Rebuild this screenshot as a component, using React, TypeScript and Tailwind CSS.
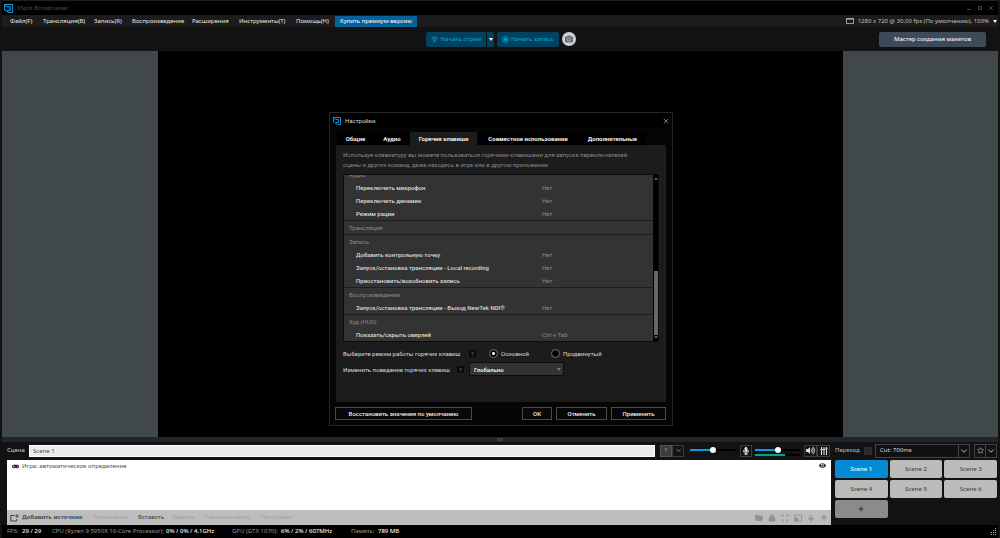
import React from "react";
import { ArrowDown, ArrowUp, ChevronDown, Folder, Lock, Maximize, Star } from "lucide-react";
import { FaGamepad, FaEye, FaCamera, FaMicrophone, FaVolumeUp } from "react-icons/fa";

function Logo({ className }: { className: string }) {
  return (
    <svg viewBox="0 0 16 16" className={className} fill="none" stroke="#119ce4" strokeWidth="1.8" aria-hidden="true">
      <path d="M1 1H15V15H9L1 10Z" />
      <path d="M1 1L5 5H11V11H6" />
    </svg>
  );
}

const menu = [
  { label: "Файл(F)", width: "w-[33px]" },
  { label: "Трансляция(B)", width: "w-[51px]" },
  { label: "Запись(R)", width: "w-[38px]" },
  { label: "Воспроизведение", width: "w-[60px]" },
  { label: "Расширения", width: "w-[47px]" },
  { label: "Инструменты(T)", width: "w-[57px]" },
  { label: "Помощь(H)", width: "w-[39px]" },
];

function TitleBar() {
  return (
    <header className="flex h-[15px] items-center border-t border-[#202020] bg-black pr-1 pl-[2px] text-[#4a4a4a]">
      <Logo className="size-[9px]" />
      <h1 className="ml-1 flex-1">XSplit Broadcaster</h1>
      <div className="flex gap-[5px]">
        <button aria-label="Свернуть" className="flex h-2 w-[6px] items-center justify-center">
          <svg viewBox="0 0 6 6" className="size-[6px]" stroke="currentColor"><path d="M1 4.5H5" /></svg>
        </button>
        <button aria-label="Развернуть" className="flex h-2 w-[6px] items-center justify-center">
          <svg viewBox="0 0 6 6" className="size-[6px]" fill="none" stroke="currentColor"><path d="M1.5 1.5H4.5V4.5H1.5Z" /></svg>
        </button>
        <button aria-label="Закрыть" className="flex h-2 w-[6px] items-center justify-center">
          <svg viewBox="0 0 6 6" className="size-[6px]" stroke="currentColor"><path d="M1 1L5 5M5 1L1 5" /></svg>
        </button>
      </div>
    </header>
  );
}

function MenuBar() {
  return (
    <nav className="flex h-3 items-center bg-[#1c1c1c] pr-px pl-2 text-[#e8e8e8]">
      {menu.map((item) => (
        <button key={item.label} className={`${item.width} text-left whitespace-nowrap`}>
          {item.label}
        </button>
      ))}
      <button className="h-[11px] w-[82px] bg-[#06619a] whitespace-nowrap text-white">Купить премиум-версию</button>
      <button className="ml-auto flex items-center gap-1 whitespace-nowrap text-[#c0c0c0]">
        <svg viewBox="0 0 8 6" className="h-[6px] w-2" fill="none" stroke="#c8c8c8" strokeWidth="0.8" aria-hidden="true">
          <path d="M.4 .4H7.6V5.6H.4ZM.4 1.2H7.6" />
        </svg>
        <span>1280 x 720 @ 30,00 fps (По умолчанию), 103%</span>
        <svg viewBox="0 0 4 3" className="h-[3px] w-1" fill="#fff" aria-hidden="true"><path d="M0 0H4L2 3Z" /></svg>
      </button>
    </nav>
  );
}

function Toolbar() {
  return (
    <div className="grid h-6 grid-cols-[1fr_auto_1fr] items-center bg-[#121212] pl-[2px] font-medium">
      <div />
      <div className="flex items-center gap-[3px] text-[#00a5c4]">
        <div className="flex h-[15px] gap-px">
          <button className="flex w-[60px] items-center justify-center gap-[3px] rounded-l-xs bg-[#03415f] whitespace-nowrap">
            <svg viewBox="0 0 8 8" className="size-[7px] shrink-0" fill="none" stroke="currentColor" strokeWidth="1" aria-hidden="true">
              <path d="M.5 2.5Q4 -.3 7.5 2.5M1.8 4Q4 2.4 6.2 4M3 5.5Q4 4.8 5 5.5L4 7Z" />
            </svg>
            Начать стрим
          </button>
          <button aria-label="Выбрать трансляцию" className="flex w-[7px] items-center justify-center rounded-r-xs bg-[#03415f]">
            <svg viewBox="0 0 4 3" className="h-[3px] w-1" fill="#fff"><path d="M0 0H4L2 3Z" /></svg>
          </button>
        </div>
        <button className="flex h-[15px] w-[62px] items-center justify-center gap-[2px] rounded-xs bg-[#03415f] whitespace-nowrap">
          <svg viewBox="0 0 8 8" className="size-[7px] shrink-0" aria-hidden="true">
            <circle cx="4" cy="4" r="3.4" fill="none" stroke="currentColor" strokeWidth="0.9" />
            <circle cx="4" cy="4" r="2" fill="currentColor" />
          </svg>
          Начать запись
        </button>
        <button aria-label="Снимок экрана" className="flex size-[14px] items-center justify-center rounded-full bg-[#cfd1d3] text-[#68717b]">
          <FaCamera className="size-2" />
        </button>
      </div>
      <button className="mr-3 h-[15px] w-[107px] justify-self-end rounded-xs bg-[#3f4a59] whitespace-nowrap text-[#f0f0f0]">
        Мастер создания макетов
      </button>
    </div>
  );
}

const sections = [
  { name: "Аудио", rows: [["Переключить микрофон", "Нет"], ["Переключить динамик", "Нет"], ["Режим рации", "Нет"]] },
  { name: "Трансляция", rows: [] },
  {
    name: "Запись",
    rows: [
      ["Добавить контрольную точку", "Нет"],
      ["Запуск/остановка трансляции - Local recording", "Нет"],
      ["Приостановить/возобновить запись", "Нет"],
    ],
  },
  { name: "Воспроизведение", rows: [["Запуск/остановка трансляции - Выход NewTek NDI®", "Нет"]] },
  { name: "Худ (HUD)", rows: [["Показать/скрыть оверлей", "Ctrl + Tab"]] },
];

const tabs = [
  { label: "Общие", width: "w-[37px]" },
  { label: "Аудио", width: "w-[34px]" },
  { label: "Горячие клавиши", width: "w-[67px]" },
  { label: "Совместное использование", width: "w-[100px]" },
  { label: "Дополнительные", width: "w-[67px]" },
];

function HotkeyTable() {
  return (
    <div className="flex h-[168px] border border-[#0c0c0c] bg-[#0a0a0a]">
      <div className="flex flex-1 flex-col justify-end overflow-hidden bg-[#333333]">
        <table className="w-full table-fixed border-separate border-spacing-0 text-left">
          <colgroup>
            <col className="w-[198px]" />
            <col />
          </colgroup>
          {sections.map((section) => (
            <tbody key={section.name}>
              <tr>
                <th colSpan={2} className="h-[14px] border-t border-[#1e1e1e] p-0 pl-[5px] font-normal text-[#8a8a8a]">
                  {section.name}
                </th>
              </tr>
              {section.rows.map(([name, key]) => (
                <tr key={name}>
                  <td className="h-[13px] p-0 pl-3 font-medium whitespace-nowrap text-[#dddddd]">{name}</td>
                  <td className="h-[13px] p-0 text-[#8c8c8c]">{key}</td>
                </tr>
              ))}
            </tbody>
          ))}
        </table>
      </div>
      <div className="flex w-[5px] flex-col items-center bg-black py-px" aria-hidden="true">
        <svg viewBox="0 0 4 3" className="mt-px h-[3px] w-1 shrink-0" fill="#555"><path d="M0 3H4L2 0Z" /></svg>
        <div className="mt-auto h-[64px] w-[4px] bg-[#676767]" />
        <svg viewBox="0 0 4 3" className="mt-px mb-px h-[3px] w-1 shrink-0" fill="#555"><path d="M0 0H4L2 3Z" /></svg>
      </div>
    </div>
  );
}

function Hint() {
  return (
    <button aria-label="Подсказка" className="flex size-[7px] items-center justify-center bg-[#0b0b0b] text-[#777]">
      ?
    </button>
  );
}

function ModeOption({ label, checked }: { label: string; checked: boolean }) {
  return (
    <label className="flex items-center gap-[3px]">
      <input
        type="radio"
        name="mode"
        defaultChecked={checked}
        className="size-[9px] appearance-none rounded-full border border-[#747474] bg-black checked:bg-[radial-gradient(circle,#fff_0_1px,#000_2px)]"
      />
      {label}
    </label>
  );
}

const footerButton = "h-[13px] border border-[#4a4a4a] bg-[#080808] font-medium whitespace-nowrap text-[#eeeeee]";

function SettingsDialog() {
  return (
    <section
      role="dialog"
      aria-label="Настройки"
      className="w-[344px] border border-[#262626] bg-[#050505] px-[6px] pb-[5px] font-[family-name:Roboto,sans-serif] text-[#d8d8d8]"
    >
      <header className="-mx-[3px] flex h-[15px] items-center gap-1 bg-black">
        <Logo className="size-2" />
        <h2 className="flex-1">Настройки</h2>
        <button aria-label="Закрыть">
          <svg viewBox="0 0 6 6" className="size-[6px]" stroke="#aaa" strokeWidth="0.7"><path d="M.7 .7L5.3 5.3M5.3 .7L.7 5.3" /></svg>
        </button>
      </header>
      <div role="tablist" className="mt-1 flex gap-px px-px">
        {tabs.map((tab, i) => (
          <button
            key={tab.label}
            role="tab"
            aria-selected={i === 2}
            className={`${tab.width} h-[13px] bg-black font-bold whitespace-nowrap text-[#eeeeee] aria-selected:bg-[#1c1c1c]`}
          >
            {tab.label}
          </button>
        ))}
      </div>
      <div className="h-[257px] bg-[#1c1c1c] px-[7px] pt-[5px]">
        <p className="mb-1 leading-[10px] text-[#888888]">
          Используя клавиатуру вы можете пользоваться горячими клавишами для запуска переключателей
          <br />
          сцены и других команд, даже находясь в игре или в другом приложении.
        </p>
        <HotkeyTable />
        <div className="mt-[5px] flex h-3 items-center whitespace-nowrap">
          <span className="w-[126px]">Выберите режим работы горячих клавиш</span>
          <Hint />
          <div className="ml-[13px] flex">
            <div className="w-[62px]"><ModeOption label="Основной" checked /></div>
            <ModeOption label="Продвинутый" checked={false} />
          </div>
        </div>
        <div className="mt-[3px] flex items-center whitespace-nowrap">
          <label htmlFor="scope" className="w-[114px]">Изменить поведение горячих клавиш</label>
          <Hint />
          <div className="ml-[5px] grid w-[95px] items-center">
            <select
              id="scope"
              className="col-start-1 row-start-1 h-[14px] appearance-none border border-[#0c0c0c] bg-[#333333] px-1 font-medium text-white"
            >
              <option>Глобально</option>
            </select>
            <svg viewBox="0 0 4 3" className="pointer-events-none col-start-1 row-start-1 mr-[3px] h-[3px] w-1 justify-self-end" fill="#777"><path d="M0 0H4L2 3Z" /></svg>
          </div>
        </div>
      </div>
      <footer className="-ml-px mt-[5px] flex gap-1">
        <button className={`${footerButton} mr-auto w-[137px]`}>Восстановить значения по умолчанию</button>
        <button className={`${footerButton} w-[30px]`}>OK</button>
        <button className={`${footerButton} w-[51px]`}>Отменить</button>
        <button className={`${footerButton} w-[55px]`}>Применить</button>
      </footer>
    </section>
  );
}

const range =
  "h-2 w-[45px] appearance-none bg-[linear-gradient(to_right,#0a9be8_50%,#000_50%)] bg-[length:100%_2px] bg-center bg-no-repeat [&::-webkit-slider-thumb]:size-[6px] [&::-webkit-slider-thumb]:appearance-none [&::-webkit-slider-thumb]:rounded-full [&::-webkit-slider-thumb]:bg-white";
const iconButton = "flex h-3 items-center justify-center border border-[#3c3c3c] bg-[#141414] text-[#dddddd]";

function SourcesPanel() {
  return (
    <section className="flex min-w-0 flex-1 flex-col">
      <div className="flex h-[17px] items-center pr-px">
        <label htmlFor="scene" className="w-[22px] text-[#cccccc]">Сцена</label>
        <input id="scene" defaultValue="Scene 1" className="h-3 min-w-0 flex-1 border border-white bg-[#ebebeb] px-[3px] text-[#3c4a60]" />
        <button className="ml-[5px] h-3 w-3 border border-[#555] bg-[#3c3c3c] text-[#5fc0c8]">1</button>
        <button aria-label="Список сцен" className={`${iconButton} w-3`}><ChevronDown className="size-[7px]" /></button>
        <input type="range" aria-label="Прозрачность" defaultValue={50} className={`${range} mb-[2px] ml-[6px]`} />
        <button aria-label="Микрофон" className={`${iconButton} ml-[5px] w-3`}><FaMicrophone className="size-2" /></button>
        <div className="ml-[3px] flex flex-col">
          <input type="range" aria-label="Громкость микрофона" defaultValue={50} className={range} />
          <div className="h-[2px] bg-black"><div className="h-full w-2/3 bg-[#05a878]" /></div>
        </div>
        <button aria-label="Звук" className={`${iconButton} ml-1 w-[13px]`}><FaVolumeUp className="size-[9px]" /></button>
        <button aria-label="Микшер" className={`${iconButton} w-[13px]`}>
          <svg viewBox="0 0 8 8" className="size-2" stroke="currentColor" strokeWidth="1.1"><path d="M1.5 0V8M4 0V8M6.5 0V8M.3 2.5H2.7M2.8 2.5H5.2M5.5 1.5H7.5" /></svg>
        </button>
      </div>
      <div className="mt-px flex h-[50px] items-start bg-white px-[5px] pt-[2px] text-[#505050]">
        <FaGamepad className="mt-px size-[7px] text-[#222]" />
        <span className="ml-[3px] flex-1">Игра: автоматическое определение</span>
        <button aria-label="Показать источник"><FaEye className="size-[7px] text-[#222]" /></button>
      </div>
      <div className="flex h-[15px] items-center bg-[#bdbdbd] px-[3px] whitespace-nowrap text-[#a0a0a0]">
        <svg viewBox="0 0 9 8" className="h-2 w-[9px]" fill="none" stroke="#444" strokeWidth="1" aria-hidden="true">
          <path d="M4.5 1.5H.8V7H6.7V5M7 .2V4M5.2 2H8.8" />
        </svg>
        <button className="ml-[3px] w-[72px] text-left font-bold text-[#4b4b4b]">Добавить источник</button>
        <button disabled className="w-11 text-left">Копировать</button>
        <button className="w-[34px] text-left text-[#3b3b3b]">Вставить</button>
        <button disabled className="w-8 text-left">Удалить</button>
        <button disabled className="w-[57px] text-left">Переименовать</button>
        <button disabled className="text-left">Настройки</button>
        <div className="ml-auto flex gap-[5px] text-[#929292]">
          <button aria-label="Группа"><Folder className="size-2" fill="currentColor" /></button>
          <button aria-label="Блокировка"><Lock className="size-2" fill="currentColor" /></button>
          <button aria-label="Во весь экран"><Maximize className="size-2" strokeWidth={3} /></button>
          <button aria-label="Положение">
            <svg viewBox="0 0 8 8" className="size-2" fill="none" stroke="currentColor" strokeWidth="0.8"><path d="M.5 1H7.5V7H.5Z" /><path d="M.5 4H4V7H.5Z" fill="currentColor" /></svg>
          </button>
          <button aria-label="Вниз"><ArrowDown className="size-2" strokeWidth={4} /></button>
          <button aria-label="Вверх"><ArrowUp className="size-2" strokeWidth={4} /></button>
        </div>
      </div>
    </section>
  );
}

function ScenesPanel() {
  return (
    <section className="w-[162px]">
      <div className="flex h-[17px] items-center">
        <label htmlFor="transition" className="w-[29px] text-[#bdbdbd]">Переход</label>
        <button aria-label="Подсказка" className="mr-[3px] size-2 bg-[#2c2c2c] leading-none text-[#0c0c0c]">i</button>
        <div className="grid flex-1 items-center">
          <select id="transition" className="col-start-1 row-start-1 h-[14px] appearance-none border border-[#444] bg-[#111] px-1 text-[#dddddd]">
            <option>Cut: 700ms</option>
          </select>
          <span className="pointer-events-none col-start-1 row-start-1 flex h-[14px] w-3 items-center justify-center justify-self-end border border-[#444] text-[#dddddd]">
            <ChevronDown className="size-[10px]" />
          </span>
        </div>
        <button aria-label="Избранное" className="ml-1 flex h-[14px] w-3 items-center justify-center border border-[#444] text-[#cccccc]"><Star className="size-[7px]" /></button>
        <button aria-label="Список избранного" className="-ml-px flex h-[14px] w-3 items-center justify-center border border-[#444] text-[#dddddd]"><ChevronDown className="size-[10px]" /></button>
      </div>
      <div className="mt-px grid grid-cols-3 gap-[2px] font-medium text-[#444444]">
        {["Scene 1", "Scene 2", "Scene 3", "Scene 4", "Scene 5", "Scene 6"].map((scene, i) => (
          <button
            key={scene}
            aria-pressed={i === 0}
            className="h-[18px] rounded-xs bg-[#bcbcbc] aria-pressed:bg-[#048bd3] aria-pressed:text-white"
          >
            {scene}
          </button>
        ))}
        <button aria-label="Добавить сцену" className="flex h-[18px] items-center justify-center rounded-xs bg-[#8b8b8b] text-[#222]">
          <svg viewBox="0 0 6 6" className="size-[6px]" stroke="currentColor" strokeWidth="0.8"><path d="M3 .5V5.5M.5 3H5.5" /></svg>
        </button>
      </div>
    </section>
  );
}

const stats = [
  { label: "FPS:", value: "29 / 29", width: "w-[45px]", labelWidth: "w-[15px]" },
  { label: "CPU (Ryzen 9 5950X 16-Core Processor):", value: "0% / 0% / 4,1GHz", width: "w-[180px]", labelWidth: "w-[114px]" },
  { label: "GPU (GTX 1070):", value: "6% / 2% / 607MHz", width: "w-[119px]", labelWidth: "w-[49px]" },
  { label: "Память:", value: "789 MB", width: "w-[50px]", labelWidth: "w-[27px]" },
];

function StatusBar() {
  return (
    <footer className="flex h-[13px] items-center bg-black pr-px pl-[5px] text-[#989898]">
      {stats.map((s) => (
        <div key={s.label} className={`${s.width} flex whitespace-nowrap`}>
          <span className={s.labelWidth}>{s.label}</span>
          <span className="font-medium text-[#f0f0f0]">{s.value}</span>
        </div>
      ))}
      <svg viewBox="0 0 7 7" className="ml-auto size-[7px]" fill="#aaa" aria-hidden="true">
        <path d="M5 0h1v1h-1zM5 2h1v1h-1zM5 4h1v1h-1zM3 2h1v1h-1zM3 4h1v1h-1zM1 4h1v1h-1zM1 6h1v1h-1zM3 6h1v1h-1zM5 6h1v1h-1z" />
      </svg>
    </footer>
  );
}

export default function App() {
  return (
    <main className="relative flex min-h-screen flex-col bg-[#121212] px-[2px] font-[family-name:'Noto_Sans',sans-serif] text-[6px] leading-[9px]">
      <TitleBar />
      <MenuBar />
      <Toolbar />
      <div className="grid flex-1 grid-cols-[156fr_685fr_155fr] bg-[#40484c]">
        <div className="col-start-2 bg-black" />
      </div>
      <div className="flex h-[5px] items-center justify-center bg-[#20272c]" role="separator">
        <div className="h-[3px] w-[6px] bg-[#3a4146]" />
      </div>
      <div className="flex gap-1 pr-px pl-[5px]">
        <SourcesPanel />
        <ScenesPanel />
      </div>
      <StatusBar />
      <div className="absolute inset-0 flex items-center justify-center pl-[2px]">
        <SettingsDialog />
      </div>
    </main>
  );
}
